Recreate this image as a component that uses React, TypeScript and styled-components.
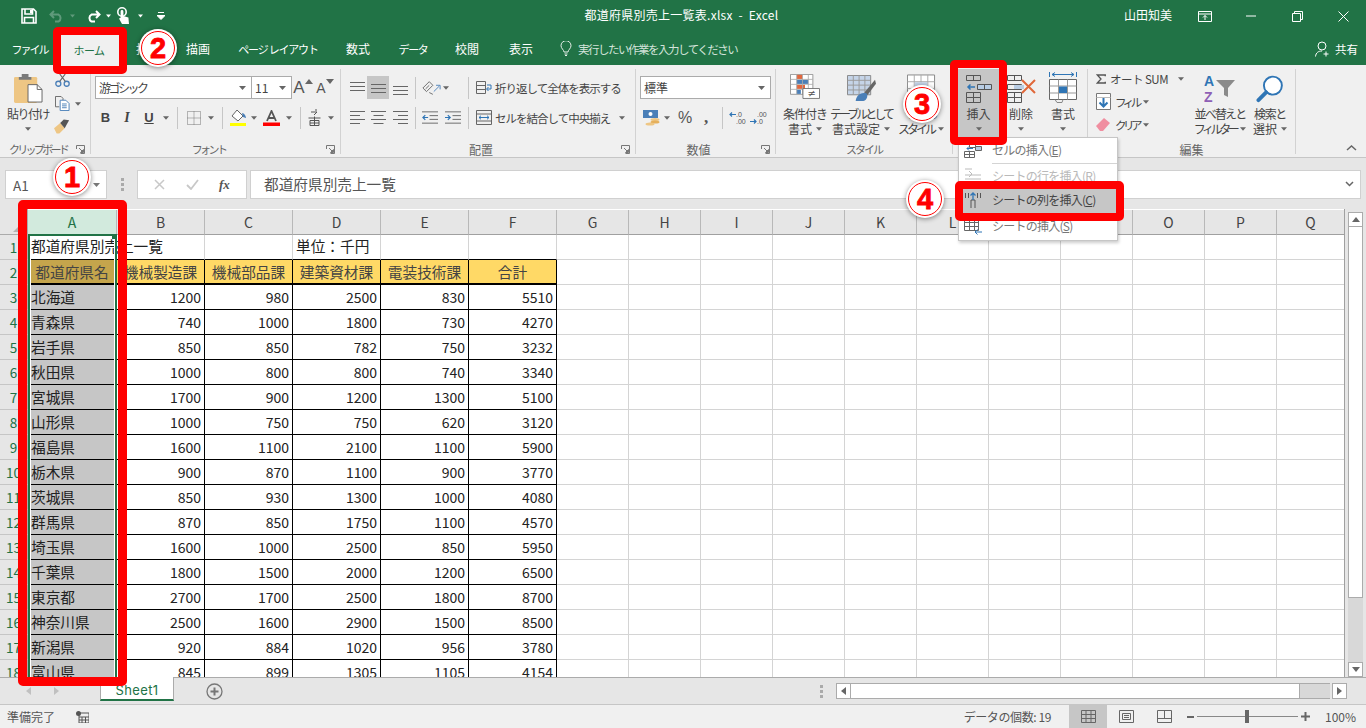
import React from 'react';
import styled, { createGlobalStyle } from 'styled-components';

const JP = `"Noto Sans CJK JP", "Noto Sans", sans-serif`;
const GREEN = '#217346';
const RED = '#ff0000';

const GlobalStyle = createGlobalStyle`
  html, body { margin: 0; padding: 0; background: #e6e6e6; }
  * { box-sizing: border-box; }
`;

const Root = styled.div`
  position: relative;
  width: 1366px;
  height: 728px;
  overflow: hidden;
  display: flex;
  flex-direction: column;
  font-family: ${JP};
  color: #444;
`;

/* title bar */
const TitleBar = styled.header`
  height: 32px;
  background: ${GREEN};
  color: #fff;
  display: grid;
  grid-template-columns: 1fr auto 1fr;
  align-items: center;
`;
const Qat = styled.div`
  display: flex;
  align-items: center;
  padding-left: 20px;
`;
const QatSlot = styled.span<{ $w: number }>`
  width: ${p => p.$w}px;
  display: flex;
  justify-content: center;
  align-items: center;
`;
const FileName = styled.div`
  font-size: 12px;
  letter-spacing: 0.25px;
  white-space: pre;
  padding-bottom: 3px;
  margin-right: 3px;
`;
const WinControls = styled.div`
  display: flex;
  justify-content: flex-end;
  align-items: center;
`;
const UserName = styled.span`
  font-size: 12px;
  margin-right: 10px;
  padding-bottom: 3px;
`;
const WinButton = styled.span`
  width: 46px;
  display: flex;
  justify-content: center;
`;

/* tabs */
const TabBar = styled.nav`
  height: 33px;
  background: ${GREEN};
  display: flex;
  align-items: stretch;
  color: #fff;
`;
const Tab = styled.div<{ $w: number; $active?: boolean; $ls?: number }>`
  width: ${p => p.$w}px;
  margin-top: ${p => (p.$active ? 3 : 0)}px;
  display: flex;
  align-items: center;
  justify-content: center;
  font-size: ${p => (p.$ls ? 11 : 12)}px;
  letter-spacing: ${p => p.$ls ?? 0}px;
  white-space: pre;
  background: ${p => (p.$active ? '#f0f0f0' : 'transparent')};
  color: ${p => (p.$active ? GREEN : '#fff')};
`;
const TellMe = styled.div`
  display: flex;
  align-items: center;
  gap: 6px;
  margin-left: 5px;
  font-size: 11.5px;
  letter-spacing: -1.5px;
  color: #d3e3da;
`;
const Share = styled.div`
  margin-left: auto;
  margin-right: 8px;
  display: flex;
  align-items: center;
  gap: 5px;
  font-size: 11.5px;
`;

/* ribbon */
const Ribbon = styled.section`
  height: 93px;
  background: #f0f0f0;
  border-bottom: 1px solid #c6c6c6;
  padding: 4px 0 3px;
  display: flex;
`;
const Group = styled.div<{ $w: number }>`
  width: ${p => p.$w}px;
  flex: none;
  border-right: 1px solid #d2d2d2;
  display: flex;
  flex-direction: column;
`;
const GroupBody = styled.div<{ $pl?: number }>`
  flex: 1;
  display: flex;
  padding-left: ${p => p.$pl ?? 0}px;
`;
const Stack = styled.div<{ $gap?: number; $pt?: number }>`
  display: flex;
  flex-direction: column;
  gap: ${p => p.$gap ?? 7}px;
  padding-top: ${p => p.$pt ?? 7}px;
`;
const ToolRow = styled.div`
  display: flex;
  align-items: center;
  height: 23px;
`;
const Tool = styled.span<{ $w: number; $active?: boolean; $h?: number }>`
  width: ${p => p.$w}px;
  height: ${p => p.$h ?? 23}px;
  flex: none;
  display: flex;
  align-items: center;
  justify-content: center;
  background: ${p => (p.$active ? '#c6c6c6' : 'transparent')};
  font-size: 13px;
  color: #444;
`;
const Sep = styled.span<{ $l?: number; $r?: number }>`
  width: 1px;
  height: 22px;
  flex: none;
  background: #c6c6c6;
  margin-left: ${p => p.$l ?? 5}px;
  margin-right: ${p => p.$r ?? 5}px;
`;
const GroupFooter = styled.div`
  height: 14px;
  padding-top: 4px;
  display: flex;
  align-items: center;
`;
const GroupLabel = styled.span<{ $ls?: number }>`
  flex: 1;
  text-align: center;
  font-size: ${p => (p.$ls ? 11 : 12)}px;
  letter-spacing: ${p => p.$ls ?? 0}px;
  color: #666;
  white-space: nowrap;
`;
const Launcher = styled.span`
  width: 14px;
  display: flex;
`;
const Combo = styled.div<{ $w: number; $noLeft?: boolean; $ls?: number }>`
  width: ${p => p.$w}px;
  height: 23px;
  flex: none;
  background: #fff;
  border: 1px solid #ababab;
  border-left-width: ${p => (p.$noLeft ? 0 : 1)}px;
  display: flex;
  align-items: center;
  justify-content: space-between;
  padding: 0 5px 0 3px;
  font-size: 12px;
  letter-spacing: ${p => p.$ls ?? 0}px;
  color: #444;
`;
const ToolText = styled.span<{ $ml?: number; $ls?: number }>`
  font-size: 11.5px;
  letter-spacing: ${p => p.$ls ?? -1}px;
  margin-left: ${p => p.$ml ?? 0}px;
  white-space: nowrap;
  color: #444;
`;
const BigButton = styled.div<{ $w: number; $active?: boolean }>`
  width: ${p => p.$w}px;
  flex: none;
  height: 68px;
  display: flex;
  flex-direction: column;
  align-items: center;
  background: ${p => (p.$active ? '#c6c6c6' : 'transparent')};
`;
const BigIcon = styled.div`
  height: 37px;
  padding-bottom: 3px;
  display: flex;
  align-items: flex-end;
  justify-content: center;
`;
const BigLabel = styled.div`
  font-size: 12px;
  line-height: 15px;
  height: 15px;
  white-space: nowrap;
  color: #444;
  display: flex;
  align-items: center;
  justify-content: center;
  gap: 4px;
`;
const LabelText = styled.span<{ $ls?: number }>`
  letter-spacing: ${p => p.$ls ?? 0}px;
`;
const CollapseSlot = styled.span`
  margin-left: auto;
  margin-right: 9px;
  align-self: flex-end;
  padding-bottom: 3px;
  display: flex;
`;
const EditColumn = styled.div`
  width: 106px;
  flex: none;
  display: flex;
  flex-direction: column;
  margin-top: -2px;
  padding-left: 8px;
`;
const EditRow = styled.div`
  height: 23px;
  display: flex;
  align-items: center;
`;

/* formula bar */
const FormulaArea = styled.div`
  height: 51px;
  background: #e6e6e6;
  padding: 12px 5px 0;
  display: flex;
  align-items: flex-start;
`;
const NameBox = styled.div`
  width: 102px;
  height: 29px;
  background: #fff;
  border: 1px solid #d0d0d0;
  display: flex;
  align-items: center;
  justify-content: space-between;
  padding: 0 6px 0 7px;
  font-size: 13.5px;
  color: #555;
`;
const GripSlot = styled.span`
  width: 30px;
  height: 29px;
  display: flex;
  align-items: center;
  justify-content: center;
`;
const FxBox = styled.div`
  width: 110px;
  height: 29px;
  background: #fff;
  border: 1px solid #d0d0d0;
  display: flex;
  align-items: center;
  justify-content: space-around;
  padding: 0 6px;
  margin-right: 3px;
`;
const FxGlyph = styled.i`
  font-family: "Liberation Serif", serif;
  font-size: 13px;
  font-weight: 700;
  color: #555;
`;
const FormulaInput = styled.div`
  flex: 1;
  height: 29px;
  background: #fff;
  border: 1px solid #d0d0d0;
  display: flex;
  align-items: center;
  justify-content: space-between;
  padding: 0 6px 2px 13px;
  font-size: 14.67px;
  color: #555;
`;

/* sheet */
const SheetRow = styled.div`
  height: 469px;
  display: flex;
  background: #e6e6e6;
  border-bottom: 1px solid #ababab;
`;
const SheetGrid = styled.div`
  position: relative;
  width: 1345px;
  height: 468px;
  overflow: hidden;
  display: grid;
  grid-template-columns: 28px 89px repeat(5, 88px) repeat(10, 72px) 68px;
  grid-auto-rows: 25px;
  grid-template-rows: 26px;
  background: #fff;
  border-right: 1px solid #a0a0a0;
`;
const Corner = styled.div`
  background: #e6e6e6;
  border-right: 1px solid #ababab;
  border-bottom: 1px solid #ababab;
  position: relative;
  &::after {
    content: '';
    position: absolute;
    right: 2px;
    bottom: 2px;
    border-style: solid;
    border-width: 0 0 12px 12px;
    border-color: transparent transparent #b4b4b4 transparent;
  }
`;
const ColHead = styled.div<{ $selected?: boolean }>`
  background: ${p => (p.$selected ? '#d2eadd' : '#e6e6e6')};
  color: ${p => (p.$selected ? GREEN : '#444')};
  border-right: 1px solid #b8b8b8;
  border-bottom: 1px solid #a0a0a0;
  display: flex;
  align-items: center;
  justify-content: center;
  font-size: 14px;
  margin-top: 1px;
`;
const RowHead = styled.div`
  background: #e6e6e6;
  color: ${GREEN};
  border-right: 1px solid #ababab;
  border-bottom: 1px solid #c6c6c6;
  display: flex;
  align-items: center;
  justify-content: center;
  font-size: 13.5px;
`;
type CellKind = 'gap' | 'title' | 'first' | 'head' | 'headSel' | 'sel' | 'num';
const cellBg: Record<CellKind, string> = {
  gap: 'transparent',
  title: 'transparent',
  first: 'transparent',
  head: '#ffd966',
  headSel: '#c5a54c',
  sel: '#c6c6c6',
  num: '#fff',
};
const rightLine: Record<CellKind, string> = {
  gap: '#d4d4d4',
  title: 'transparent',
  first: '#d4d4d4',
  head: '#000',
  headSel: '#000',
  sel: '#000',
  num: '#000',
};
const Cell = styled.div<{ $kind: CellKind }>`
  background: ${p => cellBg[p.$kind]};
  font-size: ${p => (p.$kind === 'num' ? 14 : 14.67)}px;
  color: ${p => (p.$kind === 'head' || p.$kind === 'headSel' ? '#444' : '#222')};
  white-space: nowrap;
  display: flex;
  align-items: center;
  padding: 0 3px ${p => (p.$kind === 'title' || p.$kind === 'first' ? 3 : p.$kind === 'sel' ? 1 : 0)}px;
  justify-content: ${p =>
    p.$kind === 'num' ? 'flex-end' : p.$kind === 'head' || p.$kind === 'headSel' ? 'center' : 'flex-start'};
  border-right: 1px solid ${p => rightLine[p.$kind]};
  border-bottom: ${p => (p.$kind === 'head' || p.$kind === 'headSel' ? 2 : 1)}px solid ${p => (p.$kind === 'gap' ? '#d4d4d4' : '#000')};
`;
const SelectionBox = styled.div`
  position: absolute;
  left: 28px;
  top: 25px;
  width: 89px;
  height: 460px;
  pointer-events: none;
  box-shadow: inset 0 0 0 2px ${GREEN}, inset 0 0 0 3px #fff;
  &::after {
    content: '';
    position: absolute;
    right: 0;
    top: 0;
    width: 5px;
    height: 5px;
    background: ${GREEN};
  }
`;
const VScroll = styled.div`
  width: 21px;
  padding: 3px 3px 0 3px;
  display: flex;
  flex-direction: column;
`;
const ScrollBtn = styled.div`
  height: 15px;
  flex: none;
  background: #fff;
  border: 1px solid #ababab;
  display: flex;
  align-items: center;
  justify-content: center;
`;
const VTrack = styled.div`
  flex: 1;
  background: #d8d8d8;
`;
const VThumb = styled.div`
  height: 371px;
  background: #fff;
  border: 1px solid #ababab;
  border-top: 0;
`;

/* sheet tabs */
const TabsRow = styled.div`
  height: 27px;
  background: #e6e6e6;
  border-bottom: 1px solid #c6c6c6;
  display: flex;
  align-items: flex-start;
`;
const NavArrows = styled.div`
  width: 100px;
  height: 26px;
  display: flex;
  align-items: center;
  padding-left: 26px;
  gap: 23px;
`;
const SheetTab = styled.div`
  width: 74px;
  height: 24px;
  margin-top: -1px;
  padding-top: 3px;
  background: #fff;
  border: 1px solid #ababab;
  border-top: 0;
  border-bottom: 2px solid ${GREEN};
  color: ${GREEN};
  font-family: "Inter", "Noto Sans", sans-serif;
  font-size: 13px;
  letter-spacing: 0.4px;
  display: flex;
  align-items: center;
  justify-content: center;
`;
const AddSheet = styled.span`
  margin-left: 32px;
  height: 26px;
  display: flex;
  align-items: center;
`;
const HScrollArea = styled.div`
  margin-left: auto;
  display: flex;
  align-items: center;
  height: 26px;
  padding-right: 19px;
`;
const HBtn = styled.div`
  width: 15px;
  height: 16px;
  background: #fff;
  border: 1px solid #ababab;
  display: flex;
  align-items: center;
  justify-content: center;
`;
const HTrack = styled.div`
  width: 479px;
  height: 16px;
  background: #d8d8d8;
  border-top: 1px solid #ababab;
  border-bottom: 1px solid #ababab;
  margin-right: 2px;
  display: flex;
`;
const HThumb = styled.div`
  width: 449px;
  background: #fff;
  border-right: 1px solid #ababab;
`;

/* status */
const StatusBar = styled.footer`
  flex: 1;
  background: #f0f0f0;
  display: flex;
  align-items: center;
  font-size: 12px;
  color: #555;
  padding-left: 7px;
`;
const StatusRight = styled.div`
  margin-left: auto;
  display: flex;
  align-items: center;
  height: 100%;
`;
const CountText = styled.span`
  font-size: 12px;
  letter-spacing: -0.4px;
  margin-right: 18px;
  color: #555;
`;
const ViewBtn = styled.span<{ $active?: boolean }>`
  width: 38px;
  height: 100%;
  display: flex;
  align-items: center;
  justify-content: center;
  background: ${p => (p.$active ? '#c6c6c6' : 'transparent')};
`;
const ZoomTrack = styled.div`
  position: relative;
  width: 101px;
  height: 1px;
  background: #888;
  &::after {
    content: '';
    position: absolute;
    left: 48px;
    top: -6px;
    width: 4px;
    height: 13px;
    background: #666;
  }
`;
const ZoomPct = styled.span`
  width: 41px;
  margin-left: 13px;
  font-size: 12px;
`;

/* dropdown */
const Menu = styled.div`
  position: absolute;
  left: 958px;
  top: 137px;
  width: 160px;
  height: 104px;
  background: #fff;
  border: 1px solid #c6c6c6;
  box-shadow: 1px 2px 3px rgba(0, 0, 0, 0.2);
`;
const MenuItem = styled.div<{ $tone?: 'disabled' | 'hover' | 'dim'; $h: number }>`
  height: ${p => p.$h}px;
  display: flex;
  align-items: center;
  padding-left: 5px;
  gap: 9px;
  font-size: 12px;
  letter-spacing: -0.75px;
  background: ${p => (p.$tone === 'hover' ? '#c6c6c6' : 'transparent')};
  color: ${p => (p.$tone === 'disabled' ? '#b9b9b9' : p.$tone === 'dim' ? '#777' : '#444')};
`;
const MenuText = styled.span`
  padding-bottom: 2px;
`;
const MenuRule = styled.div`
  height: 1px;
  margin-left: 33px;
  background: #d4d4d4;
`;

/* annotations */
const RedFrame = styled.div<{ $x: number; $y: number; $w: number; $h: number; $b: number }>`
  position: absolute;
  left: ${p => p.$x}px;
  top: ${p => p.$y}px;
  width: ${p => p.$w}px;
  height: ${p => p.$h}px;
  border: ${p => p.$b}px solid ${RED};
  border-radius: 5px;
  pointer-events: none;
`;
const Badge = styled.div<{ $x: number; $y: number }>`
  position: absolute;
  left: ${p => p.$x - 19}px;
  top: ${p => p.$y - 19}px;
  width: 38px;
  height: 38px;
  border-radius: 50%;
  background: #fff;
  box-shadow: 0 1px 5px rgba(0, 0, 0, 0.45);
  display: flex;
  align-items: center;
  justify-content: center;
  font-family: "Liberation Sans", sans-serif;
  font-weight: 700;
  font-size: 29px;
  -webkit-text-stroke: 0.8px ${RED};
  color: ${RED};
  &::before {
    content: '';
    position: absolute;
    inset: 2px;
    border: 1px solid ${RED};
    border-radius: 50%;
  }
`;

/* ---- icons ---- */
const Caret = ({ c = '#666', s = 7 }: { c?: string; s?: number }) => (
  <svg width={s} height={4} viewBox="0 0 7 4"><path d="M0 0h7L3.5 4z" fill={c} /></svg>
);
const LauncherIcon = () => (
  <svg width="9" height="9" viewBox="0 0 9 9"><path d="M.5 4V.5H8.5V8.5H4.5M3 3l4 4M7.5 4.500v3h-3z" fill="none" stroke="#777" /></svg>
);
const Lines = ({ rows }: { rows: number[] }) => (
  <svg width="15" height="14" viewBox="0 0 15 14">
    {rows.map(y => <path key={y} d={`M0 ${y + 0.5}h15`} stroke="#666" />)}
  </svg>
);
const AlignLines = ({ mode }: { mode: 'l' | 'c' | 'r' }) => {
  const x = (w: number) => (mode === 'l' ? 0 : mode === 'c' ? (15 - w) / 2 : 15 - w);
  return (
    <svg width="15" height="13" viewBox="0 0 15 13">
      {[0, 4, 8, 12].map((y, i) => {
        const w = i % 2 ? 10 : 15;
        return <path key={y} d={`M${x(w)} ${y + 0.5}h${w}`} stroke="#666" />;
      })}
    </svg>
  );
};
const SaveIcon = () => (
  <svg width="16" height="16" viewBox="0 0 16 16"><path d="M1 1h11.500L15 3.500V15H1zM4 1.500v4.500h7.500V1.500M3.500 15V9.500h9V15" fill="none" stroke="#fff" strokeWidth="1.600" /><path d="M9 2h2v3H9z" fill="#fff" /></svg>
);
const UndoIcon = ({ c, flip }: { c: string; flip?: boolean }) => (
  <svg width="16" height="14" viewBox="0 0 16 14" style={flip ? { transform: 'scaleX(-1)' } : undefined}>
    <path d="M5 2L1.500 5.500 5 9M2 5.500h7.500a4 4 0 0 1 0 7H6" fill="none" stroke={c} strokeWidth="2" />
  </svg>
);
const TouchIcon = () => (
  <svg width="16" height="18" viewBox="0 0 16 18"><circle cx="6" cy="5" r="4.200" fill="none" stroke="#fff" strokeWidth="1.600" /><path d="M4.600 4.500a1.400 1.400 0 0 1 2.800 0v4.500l5 1.500.6 6.500H6L3 11.500l1.600-.8z" fill="#fff" /></svg>
);
const CustomIcon = () => (
  <svg width="8" height="8" viewBox="0 0 8 8"><path d="M1 .5h6M0 3.500h8L4 7.500z" stroke="#fff" fill="#fff" strokeWidth="1" /></svg>
);
const RibbonDisplayIcon = () => (
  <svg width="14" height="11" viewBox="0 0 14 11"><path d="M.5.500h13v10H.5zM.5 3h13M7 9V4.500M5 6.500l2-2 2 2" fill="none" stroke="#fff" /></svg>
);
const MinIcon = () => <svg width="10" height="2" viewBox="0 0 10 2"><path d="M0 1h10" stroke="#fff" /></svg>;
const RestoreIcon = () => (
  <svg width="11" height="11" viewBox="0 0 11 11"><path d="M.5 2.500h8v8h-8zM2.500 2.500v-2h8v8h-2" fill="none" stroke="#fff" /></svg>
);
const CloseIcon = () => (
  <svg width="11" height="11" viewBox="0 0 11 11"><path d="M.5.500l10 10M10.500.500l-10 10" stroke="#fff" /></svg>
);
const BulbIcon = () => (
  <svg width="12" height="15" viewBox="0 0 12 15"><path d="M4 11c0-2-3-3.500-3-6.300a5 5 0 0 1 10 0C11 7.500 8 9 8 11zM4.500 13h3M5 14.500h2" fill="none" stroke="#e8f0ea" /></svg>
);
const PersonIcon = () => (
  <svg width="15" height="16" viewBox="0 0 15 16"><circle cx="7" cy="5" r="4" fill="none" stroke="#fff" /><path d="M.5 15.500c.5-4 3-5.500 6.500-5.500M11 10.500v5M8.500 13h5" fill="none" stroke="#fff" /></svg>
);
const PasteIcon = () => (
  <svg width="29" height="29" viewBox="0 0 30 30">
    <rect x="0" y="3" width="24" height="27" rx="1.500" fill="#eec684" />
    <path d="M8 3V0h7v3h3v3H5V3z" fill="#7a7a7a" />
    <path d="M14.500 11H24l5 5v13H14.500z" fill="#fff" stroke="#666" />
    <path d="M24 11v5h5" fill="none" stroke="#666" />
  </svg>
);
const ScissorsIcon = () => (
  <svg width="15" height="13" viewBox="0 0 16 14"><circle cx="3.500" cy="10.500" r="2.700" fill="none" stroke="#4a7fb8" strokeWidth="1.400" /><circle cx="12.500" cy="10.500" r="2.700" fill="none" stroke="#4a7fb8" strokeWidth="1.400" /><path d="M5 8l6-8M11 8L5 0" stroke="#666" strokeWidth="1.200" /></svg>
);
const CopyIcon = () => (
  <svg width="15" height="15" viewBox="0 0 16 16"><path d="M.5.500h6l2 2v2M.5.500v11h4" fill="none" stroke="#666" /><path d="M5.500 4.500h6l3.500 3.500v7.500H5.500zM7.500 8.500h5M7.500 10.500h5M7.500 12.500h5" fill="#fff" stroke="#4a7fb8" /></svg>
);
const BrushIcon = () => (
  <svg width="16" height="15" viewBox="0 0 18 16"><path d="M0 10l7-6 5 6-6 6H3z" fill="#eec684" /><path d="M7 4l4-4 6 1-5 9z" fill="#555" /></svg>
);
const BorderIcon = () => (
  <svg width="14" height="14" viewBox="0 0 14 14"><path d="M.5.500h13v13H.5zM7 .5v13M.5 7h13" fill="none" stroke="#777" strokeDasharray="1 1" /></svg>
);
const FillIcon = () => (
  <svg width="17" height="16" viewBox="0 0 17 16"><path d="M7 0l6 6-5 5-6-5z" fill="#fff" stroke="#666" /><path d="M12 3c2 0 4 3 4 5l-3-1z" fill="#4a7fb8" /><rect x="0" y="13" width="16" height="3" fill="#ffff00" /></svg>
);
const FontColorIcon = () => (
  <svg width="17" height="16" viewBox="0 0 17 16"><path d="M4 11L8.500 1 13 11M5.500 8h6" fill="none" stroke="#555" strokeWidth="1.800" /><rect x="0" y="12.500" width="17" height="3.500" fill="#f00" /></svg>
);
const PhoneticIcon = () => (
  <svg width="13" height="17" viewBox="0 0 13 17"><path d="M3 3h6l-3 3M8 0v2" fill="none" stroke="#555" /><path d="M.5 9h12M6.500 7.500v9.500M2 11.500h9v5H2zM2 14h9" fill="none" stroke="#555" /></svg>
);
const OrientIcon = () => (
  <svg width="19" height="16" viewBox="0 0 21 16"><path d="M1 8l7-7 4 4-7 7zM4 9l4-4" fill="none" stroke="#666" /><path d="M13 12l6-6M15.500 5H20v4.500" fill="none" stroke="#4a7fb8" /><path d="M8 13l4 2" stroke="#666" /></svg>
);
const IndentIcon = ({ dir }: { dir: 'l' | 'r' }) => (
  <svg width="16" height="13" viewBox="0 0 17 13">
    <path d="M0 .5h17M8 4.500h9M8 8.500h9M0 12.500h17" stroke="#666" />
    <path d={dir === 'l' ? 'M6.500 6.500H1M3.500 4L1 6.500 3.500 9' : 'M0 6.500h5.500M3 4l2.500 2.500L3 9'} fill="none" stroke="#2f75b5" strokeWidth="1.300" />
  </svg>
);
const WrapIcon = () => (
  <svg width="16" height="13" viewBox="0 0 16 13"><path d="M.5.500h9v12h-9zM.5 4.500h9M.5 8.500h9" fill="none" stroke="#666" /><path d="M11 4h4v4h-4M12.500 6l-2 2 2 2" fill="none" stroke="#2f75b5" /></svg>
);
const MergeIcon = () => (
  <svg width="16" height="15" viewBox="0 0 16 15"><path d="M.5.500h15v14H.5zM.5 4h15M.5 11h15" fill="none" stroke="#666" /><path d="M3 7.500h10M5 5.700L3 7.500l2 1.800M11 5.700l2 1.800-2 1.800" fill="none" stroke="#2f75b5" /></svg>
);
const CurrencyIcon = () => (
  <svg width="17" height="16" viewBox="0 0 17 16"><rect x="0" y="0" width="15" height="8" fill="#4a7fb8" /><circle cx="7.500" cy="4" r="2" fill="#fff" /><ellipse cx="12" cy="9.500" rx="4.500" ry="1.600" fill="#eec684" /><ellipse cx="12" cy="12" rx="4.500" ry="1.600" fill="#e5b05c" /><ellipse cx="7" cy="14" rx="4.500" ry="1.600" fill="#eec684" /></svg>
);
const DecimalIcon = ({ inc }: { inc?: boolean }) => (
  <svg width="18" height="15" viewBox="0 0 18 15">
    <text x="7" y="6.500" fontSize="7" fill="#555" fontFamily="Liberation Sans">{inc ? '.0' : '.00'}</text>
    <text x="7" y="14" fontSize="7" fill="#555" fontFamily="Liberation Sans">{inc ? '.00' : '.0'}</text>
    <path d={inc ? 'M7 4.500H1M3 2.500L1 4.500l2 2' : 'M0 11.500h6M4 9.500l2 2-2 2'} fill="none" stroke="#2f75b5" strokeWidth="1.200" />
  </svg>
);
const CondIcon = () => (
  <svg width="30" height="29" viewBox="0 0 36 35">
    <path d="M.5.500h27v24H.5z" fill="#fff" stroke="#888" />
    <rect x="8" y="1" width="7" height="5" fill="#e2673d" />
    <rect x="8" y="7" width="14" height="5" fill="#4a7fb8" />
    <rect x="8" y="13" width="10" height="5" fill="#e2673d" />
    <rect x="8" y="19" width="5" height="5" fill="#4a7fb8" />
    <path d="M8 .5v24M15 .5v24M22 .5v24M.5 6.500h27M.5 12.500h27M.5 18.500h27" stroke="#aaa" fill="none" />
    <path d="M15.500 17.500h20v12h-20z" fill="#fff" stroke="#666" />
    <text x="21" y="28" fontSize="12" fill="#555" fontFamily="DejaVu Sans">≠</text>
  </svg>
);
const TableStyleIcon = () => (
  <svg width="29" height="28" viewBox="0 0 30 29">
    <path d="M.5.500h24v20H.5z" fill="#c5d4e8" stroke="#888" />
    <path d="M6.500.5v20M12.500.5v20M18.500.5v20M.5 5.500h24M.5 10.500h24M.5 15.500h24" stroke="#999" fill="none" />
    <path d="M29 5L18 18l3 3L30 9z" fill="#666" />
    <path d="M9 27c0-5 5-10 11-8 2 2 1 7-3 8z" fill="#4a7fb8" />
  </svg>
);
const CellStyleIcon = () => (
  <svg width="29" height="29" viewBox="0 0 30 29">
    <path d="M.5.500h28v28H.5z" fill="#fff" stroke="#888" />
    <path d="M7.500.5v28M14.500.5v28M21.500.5v28M.5 7.500h28M.5 14.500h28M.5 21.500h28" stroke="#aaa" fill="none" />
    <rect x="8" y="8" width="13" height="6" fill="#c5d4e8" />
  </svg>
);
const InsertCellIcon = () => (
  <svg width="26" height="28" viewBox="0 0 26 28">
    <path d="M.5.500h14v5H.5zM7.500.5v5M.5 22.500h14v-5H.5zM.5 27.500h14v-5H.5zM7.500 17.500v10" fill="none" stroke="#555" />
    <path d="M11.500 9.500h14v5h-14zM18.500 9.500v5" fill="#b8cde4" stroke="#555" />
    <path d="M9 12H2M4.500 9.500L2 12l2.500 2.500" fill="none" stroke="#2f75b5" strokeWidth="1.500" />
  </svg>
);
const DeleteCellIcon = () => (
  <svg width="29" height="28" viewBox="0 0 29 28">
    <path d="M.5.500h14v5H.5zM7.500.5v5M.5 17.500h14v5H.5zM.5 22.500h14v5H.5zM7.500 17.500v10M.5 9.500h14v5H.5z" fill="none" stroke="#555" />
    <rect x="7" y="10" width="10" height="4" fill="#b8cde4" />
    <path d="M15 5l13 13M28 5L15 18" stroke="#e0683a" strokeWidth="2" />
  </svg>
);
const FormatCellIcon = () => (
  <svg width="28" height="32" viewBox="0 0 28 32">
    <path d="M.5 1v5M27.500 1v5M3 3.500h22M6 1.500L3 3.500l3 2M22 1.500l3 2-3 2" fill="none" stroke="#2f75b5" />
    <path d="M.5 8.500h27v20H.5z" fill="#fff" stroke="#666" />
    <path d="M9.500 8.500v20M18.500 8.500v20M.5 15h27M.5 22h27" stroke="#999" fill="none" />
    <rect x="10" y="15.500" width="8" height="6.500" fill="#2f75b5" />
    <path d="M6 28.500l2 3h5l1-3" fill="none" stroke="#888" />
  </svg>
);
const SigmaIcon = () => (
  <svg width="15" height="14" viewBox="0 0 15 14"><path d="M14 3V1H2l5.500 6L2 13h12v-2" fill="none" stroke="#555" strokeWidth="2" /></svg>
);
const FillDownIcon = () => (
  <svg width="15" height="17" viewBox="0 0 15 17"><path d="M.5.500h14v16H.5z" fill="#fff" stroke="#777" /><path d="M.5 4.500h14" stroke="#bbb" /><path d="M7.500 5v8M3.500 9.500l4 4 4-4" fill="none" stroke="#2f75b5" strokeWidth="2" /></svg>
);
const EraserIcon = () => (
  <svg width="15" height="13" viewBox="0 0 15 13"><path d="M0 8l8-8 6 5-7 8H4z" fill="#f08ea0" /></svg>
);
const SortIcon = () => (
  <svg width="32" height="29" viewBox="0 0 32 29">
    <text x="0" y="12" fontFamily="Liberation Sans" fontWeight="700" fontSize="14" fill="#2f75b5">A</text>
    <text x="0" y="28" fontFamily="Liberation Sans" fontWeight="700" fontSize="14" fill="#8e5fb5">Z</text>
    <path d="M12 6h19l-7 8v9l-4-2v-7z" fill="#8a8a8a" />
  </svg>
);
const FindIcon = () => (
  <svg width="28" height="28" viewBox="0 0 28 29"><circle cx="17" cy="11" r="9.300" fill="#fff" stroke="#2f75b5" strokeWidth="2" /><path d="M10 18L2 26" stroke="#2f75b5" strokeWidth="4" strokeLinecap="round" /></svg>
);
const Chevron = () => (
  <svg width="11" height="6" viewBox="0 0 11 6"><path d="M1 5l4.500-4L10 5" fill="none" stroke="#666" strokeWidth="1.500" /></svg>
);
const ChevronDown = () => (
  <svg width="9" height="6" viewBox="0 0 9 6"><path d="M1 1l3.500 3.500L8 1" fill="none" stroke="#666" strokeWidth="1.500" /></svg>
);
const Grip = () => (
  <svg width="3" height="13" viewBox="0 0 3 13"><path d="M0 0h3v3H0zM0 5h3v3H0zM0 10h3v3H0z" fill="#aaa" /></svg>
);
const MenuIcon = ({ kind, dim }: { kind: 'cell' | 'row' | 'col' | 'sheet'; dim?: boolean }) => {
  const s = dim ? '#bbb' : '#666';
  const paths = {
    cell: <><path d="M5.500 1.500h6v4h-6zM.5 9.500h10v6H.5zM5.500 9.500v6M.5 12.500h10" fill="none" stroke={s} /><path d="M11.500 4.500h6v4h-6z" fill="#b8cde4" stroke={s} /><path d="M9 6.500H3M5 4.500l-2 2 2 2" fill="none" stroke="#2f75b5" /></>,
    row: <><path d="M1 1h7M1 7h16M1 11h16M1 15h7" stroke={s} /><path d="M5 3l3 3M5 9l3-3" stroke={s} /></>,
    col: <><path d="M1.500 1v5M4.500 1v5M13.500 1v5M16.500 1v5M7 16V8h4v8" fill="none" stroke="#555" /><path d="M9 8V1M6.500 3.500L9 1l2.500 2.500" fill="none" stroke="#2f75b5" strokeWidth="1.300" /></>,
    sheet: <><path d="M.5.500h14v12H.5zM5.500.5v12M10.500.5v12M.5 4.500h14M.5 8.500h14" fill="none" stroke={s} /><path d="M18 14h-7M13.500 11.500L11 14l2.500 2.500" fill="none" stroke="#2f75b5" /></>,
  };
  return <svg width="19" height="17" viewBox="0 0 19 17">{paths[kind]}</svg>;
};
const TriLeft = ({ c = '#666' }: { c?: string }) => <svg width="5" height="8" viewBox="0 0 5 8"><path d="M5 0v8L0 4z" fill={c} /></svg>;
const TriRight = ({ c = '#666' }: { c?: string }) => <svg width="5" height="8" viewBox="0 0 5 8"><path d="M0 0v8l5-4z" fill={c} /></svg>;
const TriUp = () => <svg width="8" height="5" viewBox="0 0 8 5"><path d="M0 5h8L4 0z" fill="#666" /></svg>;
const TriDown = () => <svg width="8" height="5" viewBox="0 0 8 5"><path d="M0 0h8L4 5z" fill="#666" /></svg>;
const AddIcon = () => (
  <svg width="17" height="17" viewBox="0 0 17 17"><circle cx="8.500" cy="8.500" r="7.500" fill="none" stroke="#777" strokeWidth="1.300" /><path d="M8.500 4.500v8M4.500 8.500h8" stroke="#777" strokeWidth="2" /></svg>
);
const MacroIcon = () => (
  <svg width="13" height="12" viewBox="0 0 13 12"><rect x="3" y="2" width="10" height="10" fill="none" stroke="#555" /><path d="M3 6h10M6 6v6M9.500 6v6M3 9h10" stroke="#555" /><circle cx="2.500" cy="2.500" r="2.500" fill="#555" /></svg>
);
const ViewNormal = () => (
  <svg width="15" height="13" viewBox="0 0 15 13"><path d="M.5.500h14v12H.5zM5 .5v12M10 .5v12M.5 4.500h14M.5 8.500h14" fill="none" stroke="#666" /></svg>
);
const ViewLayout = () => (
  <svg width="15" height="13" viewBox="0 0 15 13"><path d="M.5.500h14v12H.5zM3.500 3.500h8v6h-8zM5 5.500h5M5 7.500h5" fill="none" stroke="#666" /></svg>
);
const ViewBreak = () => (
  <svg width="15" height="13" viewBox="0 0 15 13"><path d="M.5.500h14v12H.5zM.5 8.500h14M7.500.5v8" fill="none" stroke="#666" /></svg>
);
const Mark = styled.b`
  display: flex;
  align-items: flex-start;
  font-family: "Liberation Sans", sans-serif;
  font-weight: 400;
  font-size: 17px;
  line-height: 18px;
  color: #555;
`;
const SmallMark = styled(Mark)`
  font-size: 14px;
`;
const StyleB = styled.b`
  font-family: "Liberation Sans", sans-serif;
  font-size: 13px;
`;
const StyleI = styled.i`
  font-family: "Liberation Serif", serif;
  font-size: 14px;
  font-weight: 700;
`;
const StyleU = styled.u`
  font-family: "Liberation Sans", sans-serif;
  font-size: 13px;
  font-weight: 700;
`;
const Percent = styled.span`
  font-family: "Liberation Sans", sans-serif;
  font-size: 16px;
  color: #555;
`;
const Comma = styled.b`
  font-family: "Liberation Serif", serif;
  font-size: 17px;
  line-height: 10px;
  color: #555;
`;

const columns = ['A', 'B', 'C', 'D', 'E', 'F', 'G', 'H', 'I', 'J', 'K', 'L', 'M', 'N', 'O', 'P', 'Q'];
const tableRows: [string, number, number, number, number, number][] = [
  ['北海道', 1200, 980, 2500, 830, 5510],
  ['青森県', 740, 1000, 1800, 730, 4270],
  ['岩手県', 850, 850, 782, 750, 3232],
  ['秋田県', 1000, 800, 800, 740, 3340],
  ['宮城県', 1700, 900, 1200, 1300, 5100],
  ['山形県', 1000, 750, 750, 620, 3120],
  ['福島県', 1600, 1100, 2100, 1100, 5900],
  ['栃木県', 900, 870, 1100, 900, 3770],
  ['茨城県', 850, 930, 1300, 1000, 4080],
  ['群馬県', 870, 850, 1750, 1100, 4570],
  ['埼玉県', 1600, 1000, 2500, 850, 5950],
  ['千葉県', 1800, 1500, 2000, 1200, 6500],
  ['東京都', 2700, 1700, 2500, 1800, 8700],
  ['神奈川県', 2500, 1600, 2900, 1500, 8500],
  ['新潟県', 920, 884, 1020, 956, 3780],
  ['富山県', 845, 899, 1305, 1105, 4154],
];
const restCols = Array.from({ length: 11 });

const Footer = ({ label, ls, launcher = true }: { label: string; ls?: number; launcher?: boolean }) => (
  <GroupFooter>
    <GroupLabel $ls={ls}>{label}</GroupLabel>
    {launcher && <Launcher><LauncherIcon /></Launcher>}
  </GroupFooter>
);

const Big = ({ w, active, icon, top, bottom, topLs, bottomLs, caretOnly }: {
  w: number; active?: boolean; icon: React.ReactNode; top: string; bottom?: string; topLs?: number; bottomLs?: number; caretOnly?: boolean;
}) => (
  <BigButton $w={w} $active={active}>
    <BigIcon>{icon}</BigIcon>
    <BigLabel>
      <LabelText $ls={topLs}>{top}</LabelText>
    </BigLabel>
    <BigLabel>
      {!caretOnly && <LabelText $ls={bottomLs}>{bottom}</LabelText>}
      <Caret s={6} />
    </BigLabel>
  </BigButton>
);

export default function App() {
  return (
    <Root>
      <GlobalStyle />
      <TitleBar>
        <Qat>
          <QatSlot $w={18}><SaveIcon /></QatSlot>
          <QatSlot $w={9} />
          <QatSlot $w={20}><UndoIcon c="#5f9a7b" /></QatSlot>
          <QatSlot $w={10}><Caret c="#5f9a7b" s={5} /></QatSlot>
          <QatSlot $w={5} />
          <QatSlot $w={22}><UndoIcon c="#fff" flip /></QatSlot>
          <QatSlot $w={8}><Caret c="#fff" s={5} /></QatSlot>
          <QatSlot $w={24}><TouchIcon /></QatSlot>
          <QatSlot $w={8}><Caret c="#fff" s={5} /></QatSlot>
          <QatSlot $w={34}><CustomIcon /></QatSlot>
        </Qat>
        <FileName>都道府県別売上一覧表.xlsx  -  Excel</FileName>
        <WinControls>
          <UserName>山田知美</UserName>
          <WinButton><RibbonDisplayIcon /></WinButton>
          <WinButton><MinIcon /></WinButton>
          <WinButton><RestoreIcon /></WinButton>
          <WinButton><CloseIcon /></WinButton>
        </WinControls>
      </TitleBar>

      <TabBar>
        <Tab $w={59} $ls={-2}>ファイル</Tab>
        <Tab $w={60} $ls={-0.6} $active>ホーム</Tab>
        <Tab $w={58}>挿入</Tab>
        <Tab $w={42}>描画</Tab>
        <Tab $w={118} $ls={-1.2}>ページ レイアウト</Tab>
        <Tab $w={42}>数式</Tab>
        <Tab $w={68} $ls={-1.3}>データ</Tab>
        <Tab $w={40}>校閲</Tab>
        <Tab $w={68}>表示</Tab>
        <TellMe><BulbIcon />実行したい作業を入力してください</TellMe>
        <Share><PersonIcon />共有</Share>
      </TabBar>

      <Ribbon>
        <Group $w={91}>
          <GroupBody $pl={3}>
            <Big w={50} icon={<PasteIcon />} top="貼り付け" topLs={-1.5} caretOnly />
            <Stack $gap={0} $pt={0}>
              <ToolRow><Tool $w={18}><ScissorsIcon /></Tool></ToolRow>
              <ToolRow><Tool $w={18}><CopyIcon /></Tool><Tool $w={14}><Caret s={6} /></Tool></ToolRow>
              <ToolRow><Tool $w={18}><BrushIcon /></Tool></ToolRow>
            </Stack>
          </GroupBody>
          <Footer label="クリップボード" ls={-2.7} />
        </Group>

        <Group $w={250}>
          <GroupBody $pl={4}>
            <Stack>
              <ToolRow>
                <Combo $w={157} $ls={-2.5}>游ゴシック<Caret /></Combo>
                <Combo $w={40} $noLeft>11<Caret /></Combo>
                <Tool $w={22}><Mark>A<TriUp /></Mark></Tool>
                <Tool $w={22}><SmallMark>A<TriDown /></SmallMark></Tool>
              </ToolRow>
              <ToolRow>
                <Tool $w={21}><StyleB>B</StyleB></Tool>
                <Tool $w={22}><StyleI>I</StyleI></Tool>
                <Tool $w={22}><StyleU>U</StyleU></Tool>
                <Tool $w={12}><Caret s={6} /></Tool>
                <Sep />
                <Tool $w={22}><BorderIcon /></Tool>
                <Tool $w={12}><Caret s={6} /></Tool>
                <Sep />
                <Tool $w={20}><FillIcon /></Tool>
                <Tool $w={12}><Caret s={6} /></Tool>
                <Tool $w={23}><FontColorIcon /></Tool>
                <Tool $w={12}><Caret s={6} /></Tool>
                <Sep $r={3} />
                <Tool $w={20}><PhoneticIcon /></Tool>
                <Tool $w={13}><Caret s={6} /></Tool>
              </ToolRow>
            </Stack>
          </GroupBody>
          <Footer label="フォント" ls={-2.6} />
        </Group>

        <Group $w={295}>
          <GroupBody $pl={6}>
            <Stack>
              <ToolRow>
                <Tool $w={20}><Lines rows={[1, 5, 9]} /></Tool>
                <Tool $w={22} $active><Lines rows={[3, 7, 11]} /></Tool>
                <Tool $w={22}><Lines rows={[5, 9, 13]} /></Tool>
                <Sep $l={4} $r={6} />
                <Tool $w={19}><OrientIcon /></Tool>
                <Tool $w={9}><Caret s={6} /></Tool>
                <Sep $l={18} $r={7} />
                <Tool $w={16}><WrapIcon /></Tool>
                <ToolText $ml={3}>折り返して全体を表示する</ToolText>
              </ToolRow>
              <ToolRow>
                <Tool $w={20}><AlignLines mode="l" /></Tool>
                <Tool $w={22}><AlignLines mode="c" /></Tool>
                <Tool $w={22}><AlignLines mode="r" /></Tool>
                <Sep $l={4} $r={6} />
                <Tool $w={16}><IndentIcon dir="l" /></Tool>
                <Tool $w={30}><IndentIcon dir="r" /></Tool>
                <Sep $l={0} $r={7} />
                <Tool $w={16}><MergeIcon /></Tool>
                <ToolText $ml={3}>セルを結合して中央揃え</ToolText>
                <Tool $w={24}><Caret s={6} /></Tool>
              </ToolRow>
            </Stack>
          </GroupBody>
          <Footer label="配置" />
        </Group>

        <Group $w={140}>
          <GroupBody $pl={4}>
            <Stack>
              <ToolRow><Combo $w={131}>標準<Caret /></Combo></ToolRow>
              <ToolRow>
                <Tool $w={22}><CurrencyIcon /></Tool>
                <Tool $w={10}><Caret s={6} /></Tool>
                <Tool $w={26}><Percent>%</Percent></Tool>
                <Tool $w={16}><Comma>,</Comma></Tool>
                <Sep $l={8} $r={6} />
                <Tool $w={18}><DecimalIcon inc /></Tool>
                <Tool $w={24}><DecimalIcon /></Tool>
              </ToolRow>
            </Stack>
          </GroupBody>
          <Footer label="数値" />
        </Group>

        <Group $w={177}>
          <GroupBody $pl={5}>
            <Big w={48} icon={<CondIcon />} top="条件付き" topLs={-1} bottom="書式" />
            <Big w={64} icon={<TableStyleIcon />} top="テーブルとして" topLs={-3} bottom="書式設定" />
            <Big w={56} icon={<CellStyleIcon />} top="セルの" topLs={-1.5} bottom="スタイル" bottomLs={-3} />
          </GroupBody>
          <Footer label="スタイル" ls={-2} launcher={false} />
        </Group>

        <Group $w={135}>
          <GroupBody $pl={4}>
            <Big w={43} active icon={<InsertCellIcon />} top="挿入" caretOnly />
            <Big w={42} icon={<DeleteCellIcon />} top="削除" caretOnly />
            <Big w={42} icon={<FormatCellIcon />} top="書式" caretOnly />
          </GroupBody>
          <Footer label="セル" ls={-1} launcher={false} />
        </Group>

        <Group $w={208}>
          <GroupBody>
            <EditColumn>
              <EditRow><SigmaIcon /><ToolText $ml={4} $ls={-0.5}>オート SUM</ToolText><Tool $w={26}><Caret s={6} /></Tool></EditRow>
              <EditRow><FillDownIcon /><ToolText $ml={4} $ls={-3.5}>フィル</ToolText><Tool $w={14}><Caret s={6} /></Tool></EditRow>
              <EditRow><EraserIcon /><ToolText $ml={4} $ls={-3.5}>クリア</ToolText><Tool $w={14}><Caret s={6} /></Tool></EditRow>
            </EditColumn>
            <Big w={52} icon={<SortIcon />} top="並べ替えと" topLs={-1.8} bottom="フィルター" bottomLs={-3.4} />
            <Big w={48} icon={<FindIcon />} top="検索と" topLs={-1.3} bottom="選択" />
          </GroupBody>
          <Footer label="編集" launcher={false} />
        </Group>
        <CollapseSlot><Chevron /></CollapseSlot>
      </Ribbon>

      <FormulaArea>
        <NameBox>A1<Caret c="#777" /></NameBox>
        <GripSlot><Grip /></GripSlot>
        <FxBox>
          <svg width="11" height="11" viewBox="0 0 11 11"><path d="M1 1l9 9M10 1l-9 9" stroke="#c8c8c8" strokeWidth="1.500" /></svg>
          <svg width="13" height="11" viewBox="0 0 13 11"><path d="M1 6l4 4 7-9" fill="none" stroke="#c8c8c8" strokeWidth="1.800" /></svg>
          <FxGlyph>fx</FxGlyph>
        </FxBox>
        <FormulaInput>都道府県別売上一覧<ChevronDown /></FormulaInput>
      </FormulaArea>

      <SheetRow>
        <SheetGrid>
          <Corner />
          {columns.map((c, i) => <ColHead key={c} $selected={i === 0}>{c}</ColHead>)}

          <RowHead>1</RowHead>
          <Cell $kind="title">都道府県別売上一覧</Cell>
          <Cell $kind="first" />
          <Cell $kind="first" />
          <Cell $kind="first">単位：千円</Cell>
          <Cell $kind="first" />
          <Cell $kind="first" />
          {restCols.map((_, i) => <Cell key={i} $kind="gap" />)}

          <RowHead>2</RowHead>
          <Cell $kind="headSel">都道府県名</Cell>
          {['機械製造課', '機械部品課', '建築資材課', '電装技術課', '合計'].map(h => (
            <Cell key={h} $kind="head">{h}</Cell>
          ))}
          {restCols.map((_, i) => <Cell key={i} $kind="gap" />)}

          {tableRows.map((row, r) => (
            <React.Fragment key={row[0]}>
              <RowHead>{r + 3}</RowHead>
              <Cell $kind="sel">{row[0]}</Cell>
              {row.slice(1).map((v, i) => <Cell key={i} $kind="num">{v}</Cell>)}
              {restCols.map((_, i) => <Cell key={i} $kind="gap" />)}
            </React.Fragment>
          ))}
          <SelectionBox />
        </SheetGrid>
        <VScroll>
          <ScrollBtn><TriUp /></ScrollBtn>
          <VTrack><VThumb /></VTrack>
          <ScrollBtn><TriDown /></ScrollBtn>
        </VScroll>
      </SheetRow>

      <TabsRow>
        <NavArrows><TriLeft c="#c0c0c0" /><TriRight c="#c0c0c0" /></NavArrows>
        <SheetTab>Sheet1</SheetTab>
        <AddSheet><AddIcon /></AddSheet>
        <HScrollArea>
          <GripSlot><Grip /></GripSlot>
          <HBtn><TriLeft /></HBtn>
          <HTrack><HThumb /></HTrack>
          <HBtn><TriRight /></HBtn>
        </HScrollArea>
      </TabsRow>

      <StatusBar>
        準備完了
        <Tool $w={54}><MacroIcon /></Tool>
        <StatusRight>
          <CountText>データの個数: 19</CountText>
          <ViewBtn $active><ViewNormal /></ViewBtn>
          <ViewBtn><ViewLayout /></ViewBtn>
          <ViewBtn><ViewBreak /></ViewBtn>
          <Tool $w={14} $h={14}><svg width="7" height="2"><rect width="7" height="2" fill="#666" /></svg></Tool>
          <ZoomTrack />
          <Tool $w={14} $h={14}><svg width="9" height="9"><path d="M0 4.500h9M4.500 0v9" stroke="#666" strokeWidth="2" /></svg></Tool>
          <ZoomPct>100%</ZoomPct>
        </StatusRight>
      </StatusBar>

      <Menu>
        <MenuItem $h={25} $tone="dim"><MenuIcon kind="cell" /><MenuText>セルの挿入(<u>E</u>)</MenuText></MenuItem>
        <MenuRule />
        <MenuItem $h={24} $tone="disabled"><MenuIcon kind="row" dim /><MenuText>シートの行を挿入(<u>R</u>)</MenuText></MenuItem>
        <MenuItem $h={25} $tone="hover"><MenuIcon kind="col" /><MenuText>シートの列を挿入(<u>C</u>)</MenuText></MenuItem>
        <MenuItem $h={27} $tone="dim"><MenuIcon kind="sheet" /><MenuText>シートの挿入(<u>S</u>)</MenuText></MenuItem>
      </Menu>

      <RedFrame $x={18} $y={200} $w={109} $h={486} $b={9} />
      <RedFrame $x={53} $y={27} $w={74} $h={47} $b={8} />
      <RedFrame $x={950} $y={60} $w={57} $h={85} $b={8} />
      <RedFrame $x={955} $y={181} $w={169} $h={40} $b={8} />
      <Badge $x={72} $y={177}>1</Badge>
      <Badge $x={158} $y={48}>2</Badge>
      <Badge $x={922} $y={104}>3</Badge>
      <Badge $x={925} $y={199}>4</Badge>
    </Root>
  );
}
